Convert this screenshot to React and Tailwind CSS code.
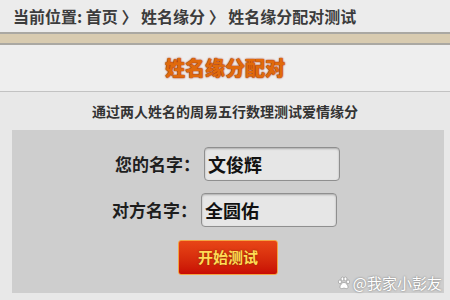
import React from 'react'

const font = { fontFamily: '"Noto Sans CJK SC", "Noto Sans", sans-serif' };

function Paw() {
    return (
        <svg width="14" height="14" viewBox="0 0 24 24" fill="#ffffff" stroke="#8a8a8a" strokeWidth="1">
            <ellipse cx="5" cy="10" rx="2.6" ry="3.2" />
            <ellipse cx="9.5" cy="5" rx="2.6" ry="3.2" />
            <ellipse cx="14.5" cy="5" rx="2.6" ry="3.2" />
            <ellipse cx="19" cy="10" rx="2.6" ry="3.2" />
            <path d="M12 11c-3.5 0-7 5-7 8 0 2 2 3 4 2.5 1.2-.3 2-.8 3-.8s1.8.5 3 .8c2 .5 4-.5 4-2.5 0-3-3.5-8-7-8z" />
        </svg>
    );
}

function NameRow({ label, value, offset }) {
    return (
        <div className={`flex items-center ${offset}`}>
            <span className="w-[85px] text-right text-[17px] font-bold text-[#1e1e1e]">{label}</span>
            <div className="ml-[4px] w-[136px] h-[34px] rounded-[4px] border border-[#8f8f8f] bg-[#e6e6e6] flex items-center px-[3px] shadow-[inset_0_1px_2px_rgba(0,0,0,0.25)]">
                <span className="text-[18px] font-bold text-[#111]">{value}</span>
            </div>
        </div>
    );
}

export default function App() {
    return (
        <div className="relative w-[450px] h-[300px] overflow-hidden bg-[#e8e8e8]" style={font}>
            {/* breadcrumb */}
            <div className="h-[32px] flex items-center px-[13px] bg-[#ececec] text-[16px] font-bold text-[#3c3c3c]">
                <span>当前位置: 首页 〉 姓名缘分 〉 姓名缘分配对测试</span>
            </div>

            <div className="h-[13px] bg-[#d8cbb0] border-y-2 border-[#aaa8a2]"></div>

            {/* title */}
            <div className="h-[47px] flex items-center justify-center bg-[#eeeeee] border-b border-[#c2c2c2]">
                <span className="text-[20px] font-black text-[#e06a0c] [text-shadow:0_0_1px_#8a2000,0_0_2px_#b03000]">姓名缘分配对</span>
            </div>

            <div className="h-[38px] flex items-center justify-center text-[14px] font-bold text-[#333]">
                通过两人姓名的周易五行数理测试爱情缘分
            </div>

            {/* form panel */}
            <div className="ml-[12px] mr-[6px] h-[163px] bg-[#cecece] pt-[17px] flex flex-col">
                <NameRow label="您的名字：" value="文俊辉" offset="ml-[103px]" />
                <div className="h-[12px]"></div>
                <NameRow label="对方名字：" value="全圆佑" offset="ml-[100px]" />
                <div className="h-[13px]"></div>
                <button className="self-center w-[100px] h-[35px] rounded-[3px] border border-[#f3a545] bg-gradient-to-b from-[#e84516] to-[#c80a04] text-[15px] font-bold text-[#ffdb55] [text-shadow:0_0_2px_#7a2a00]">
                    开始测试
                </button>
            </div>

            {/* watermark */}
            <div className="absolute right-[8px] bottom-[6px] flex items-center gap-[2px] text-[15px] text-white [text-shadow:0_0_2px_#6a6a6a]">
                <Paw />
                <span>@我家小彭友</span>
            </div>
        </div>
    )
}
